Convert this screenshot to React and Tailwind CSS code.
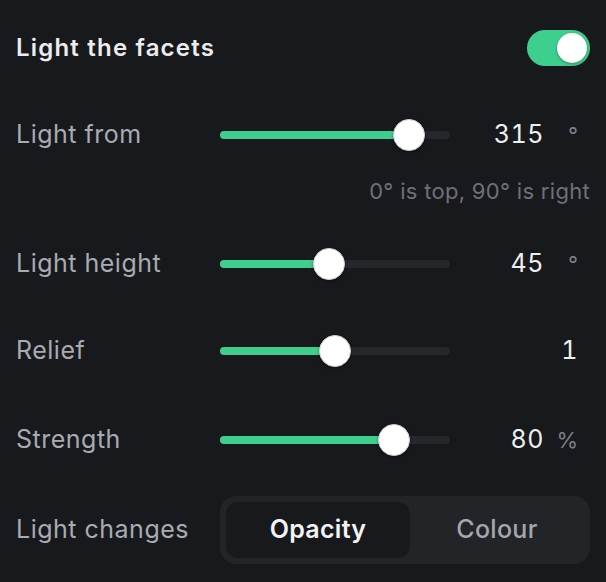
import React, { useState } from "react";

const rows = [
  { label: "Light from", value: 315, min: 0, max: 360, unit: "°", hint: "0° is top, 90° is right" },
  { label: "Light height", value: 45, min: 3, max: 92, unit: "°" },
  { label: "Relief", value: 1, min: 0, max: 2, unit: "" },
  { label: "Strength", value: 80, min: 0, max: 100, unit: "%" },
];

const Slider = ({ value, min, max }) => {
  const pct = (value - min) / (max - min);
  // thumb is 32px, keep it inside the 230px track
  const center = 16 + pct * (230 - 32);
  return (
    <div className="relative h-10 w-[230px] flex items-center">
      <div className="h-2 w-full rounded-full bg-[#25272b]" />
      <div
        className="absolute left-0 h-2 rounded-full bg-[#3ecf8e]"
        style={{ width: center }}
      />
      <div
        className="absolute h-[32px] w-[32px] rounded-full bg-white border border-[#cfd1d4] shadow-[0_1px_3px_rgba(0,0,0,0.4)]"
        style={{ left: center - 16 }}
      />
    </div>
  );
};

const Row = ({ row, className }) => (
  <div className={"flex items-center h-10 " + className}>
    <div className="w-[204px] text-[25px] tracking-[0.5px] text-[#a7abb2]">{row.label}</div>
    <Slider value={row.value} min={row.min} max={row.max} />
    {row.unit ? (
      <>
        <div className="w-[94px] text-right text-[25px] tabular-nums tracking-[0.5px] text-[#eeeff1]">
          {row.value}
        </div>
        <div className="w-[34px] text-right text-[22px] text-[#7b8089]">{row.unit}</div>
      </>
    ) : (
      <div className="w-[128px] text-right text-[25px] tabular-nums tracking-[0.5px] text-[#eeeff1]">
        {row.value}
      </div>
    )}
  </div>
);

export default function App() {
  const [on, setOn] = useState(true);
  const [mode, setMode] = useState("opacity");

  return (
    <div
      className="w-[606px] h-[582px] bg-[#18191c] pl-4 pr-4 pt-[30px] overflow-hidden"
      style={{ fontFamily: "Inter, 'Noto Sans', sans-serif" }}
    >
      <div className="flex items-center justify-between h-9">
        <div className="text-[24px] font-semibold tracking-[1.2px] text-[#ececee]">Light the facets</div>
        <button
          onClick={() => setOn(!on)}
          className={
            "w-[63px] h-9 rounded-full p-[3px] flex " +
            (on ? "bg-[#3ecf8e] justify-end" : "bg-[#2b2d31] justify-start")
          }
        >
          <span className="block w-[30px] h-[30px] rounded-full bg-white shadow-[0_1px_3px_rgba(0,0,0,0.35)]" />
        </button>
      </div>

      <Row row={rows[0]} className="mt-[49px]" />
      <div className="mt-[22px] h-7 text-right text-[22px] tracking-[0.3px] leading-7 text-[#6c7179]">
        {rows[0].hint}
      </div>
      <Row row={rows[1]} className="mt-[39px]" />
      <Row row={rows[2]} className="mt-[47px]" />
      <Row row={rows[3]} className="mt-[49px]" />

      <div className="mt-[36px] flex items-center">
        <div className="w-[204px] text-[25px] tracking-[0.5px] text-[#a7abb2]">Light changes</div>
        <div className="w-[370px] h-[68px] rounded-[16px] bg-[#222428] p-[6px] flex">
          <button
            onClick={() => setMode("opacity")}
            className={
              "w-[184px] h-14 rounded-[12px] text-[25px] tracking-[0.3px] " +
              (mode === "opacity"
                ? "bg-[#18191c] font-semibold text-[#f2f3f5]"
                : "font-medium text-[#a3a7ae]")
            }
          >
            Opacity
          </button>
          <button
            onClick={() => setMode("colour")}
            className={
              "flex-1 h-14 rounded-[12px] text-[25px] tracking-[0.3px] " +
              (mode === "colour"
                ? "bg-[#18191c] font-semibold text-[#f2f3f5]"
                : "font-medium text-[#a3a7ae]")
            }
          >
            Colour
          </button>
        </div>
      </div>
    </div>
  );
}
